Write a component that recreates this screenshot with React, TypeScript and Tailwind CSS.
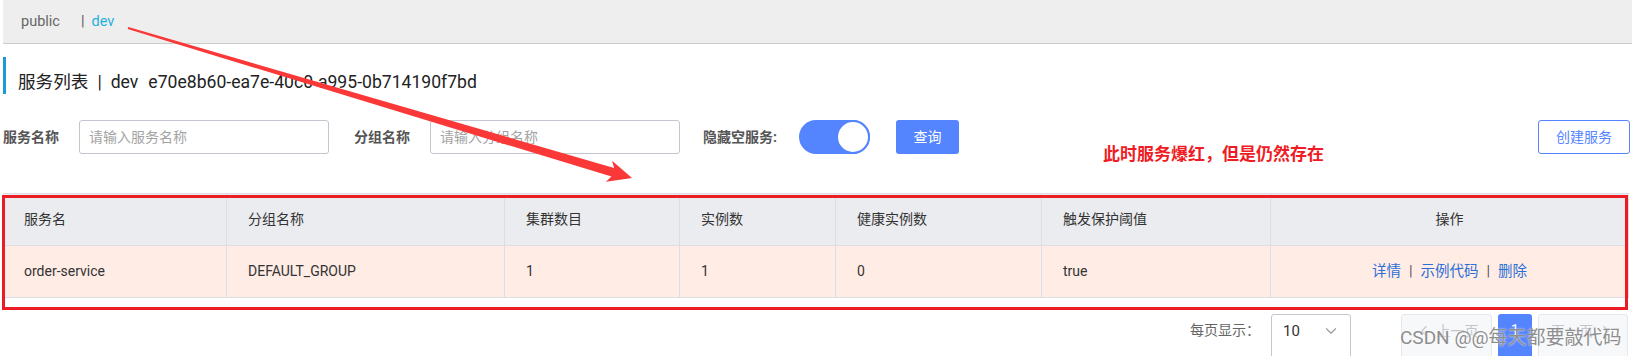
import { ChevronDown, ChevronLeft, ChevronRight } from 'lucide-react'

const columns = ['服务名', '分组名称', '集群数目', '实例数', '健康实例数', '触发保护阈值', '操作']

const rows = [
  { name: 'order-service', group: 'DEFAULT_GROUP', clusters: '1', instances: '1', healthy: '0', threshold: 'true' },
]

function Arrow() {
  return (
    <svg className="absolute left-0 top-0 pointer-events-none" width="1632" height="356" viewBox="0 0 1632 356">
      <polygon
        points="128.3,27 614.1,168 612.1,160.7 632,178 605.9,181.7 611.5,176.6 127.7,29"
        fill="#fb3838"
      />
    </svg>
  )
}

export default function App() {
  return (
    <div className="relative w-[1632px] h-[356px] overflow-hidden bg-white font-[Roboto,'Noto_Sans_CJK_SC',sans-serif] text-[#333]">
      {/* namespace bar */}
      <div className="ml-[3px] h-[44px] bg-[#eeeeee] border-b border-[#cccccc] flex items-center text-[14.5px]">
        <span className="ml-[18px] text-[#666]">public</span>
        <span className="ml-[21px] text-[#555]">|</span>
        <span className="ml-[7px] text-[#1fb0dd]">dev</span>
      </div>

      {/* title */}
      <div className="mt-[13px] flex items-start">
        <div className="ml-[3px] w-[3px] h-[37px] bg-[#1a9ad6]" />
        <div className="ml-[12px] mt-[13px] text-[17.6px] leading-[24px] text-[#222] flex">
          <span>服务列表</span>
          <span className="mx-[9px]">|</span>
          <span>dev</span>
          <span className="ml-[10px]">e70e8b60-ea7e-40c0-a995-0b714190f7bd</span>
        </div>
      </div>

      {/* filters */}
      <div className="mt-[26px] h-[34px] flex items-center text-[14px]">
        <span className="ml-[3px] w-[60px] font-bold text-[#555]">服务名称</span>
        <div className="ml-[16px] w-[250px] h-[34px] border border-[#c4c6cf] rounded-[3px] flex items-center pl-[9px] text-[#a3a3a3]">
          请输入服务名称
        </div>
        <span className="ml-[25px] w-[59px] font-bold text-[#555]">分组名称</span>
        <div className="ml-[17px] w-[250px] h-[34px] border border-[#c4c6cf] rounded-[3px] flex items-center pl-[9px] text-[#a3a3a3]">
          请输入分组名称
        </div>
        <span className="ml-[23px] w-[81px] font-bold text-[#555]">隐藏空服务:</span>
        <div className="ml-[15px] w-[71px] h-[34px] rounded-full bg-[#5584ff] flex justify-end">
          <div className="w-[34px] h-[34px] rounded-full bg-white border-2 border-[#5584ff]" />
        </div>
        <button className="ml-[26px] w-[63px] h-[34px] rounded-[3px] bg-[#5584ff] text-white">查询</button>
        <div className="flex-1" />
        <button className="mr-[2px] w-[92px] h-[34px] rounded-[3px] border border-[#5584ff] text-[#5584ff] bg-white">
          创建服务
        </button>
      </div>

      {/* table */}
      <div className="mt-[39px] ml-[3px] w-[1626px] border-t border-r border-[#dcdee3] text-[14px]">
        <div className="grid grid-cols-[224px_278px_175px_156px_206px_229px_1fr] h-[52px] bg-[#ebecf0] border-b border-[#dcdee3]">
          {columns.map((c, i) => (
            <div
              key={c}
              className={
                i === columns.length - 1
                  ? 'flex items-center justify-center text-[#333]'
                  : 'flex items-center pl-[21px] border-r border-[#dcdee3] text-[#333]'
              }
            >
              {c}
            </div>
          ))}
        </div>
        {rows.map((r) => (
          <div
            key={r.name}
            className="grid grid-cols-[224px_278px_175px_156px_206px_229px_1fr] h-[52px] bg-[#ffece5] border-b border-[#dcdee3]"
          >
            {[r.name, r.group, r.clusters, r.instances, r.healthy, r.threshold].map((v, i) => (
              <div key={i} className="flex items-center pl-[21px] border-r border-[#dcdee3] text-[#333]">
                {v}
              </div>
            ))}
            <div className="flex items-center justify-center text-[#2c6fd6] text-[14.5px]">
              <span>详情</span>
              <span className="mx-[8px] text-[#555]">|</span>
              <span>示例代码</span>
              <span className="mx-[8px] text-[#555]">|</span>
              <span>删除</span>
            </div>
          </div>
        ))}
      </div>

      {/* pagination, cut off by the bottom edge */}
      <div className="mt-[16px] flex items-start justify-end text-[14px] pr-[4px]">
        <span className="mt-[6px] leading-[20px] text-[#666]">每页显示：</span>
        <div className="ml-[11px] w-[80px] h-[48px] border border-[#c4c6cf] rounded-[3px] flex items-start justify-between pt-[6px] pl-[11px] pr-[10px] leading-[20px]">
          <span className="text-[#333] text-[15px]">10</span>
          <ChevronDown size={18} strokeWidth={1.5} className="mt-[1px] text-[#999]" />
        </div>
        <button className="ml-[50px] w-[91px] h-[48px] rounded-[3px] border border-[#e6e7eb] bg-[#f7f8fa] text-[#c4c6cf] flex items-start justify-center gap-[4px] pt-[6px] leading-[20px]">
          <ChevronLeft size={18} strokeWidth={1.5} className="mt-[1px]" />
          上一页
        </button>
        <button className="ml-[6px] w-[34px] h-[48px] rounded-[3px] bg-[#5584ff] text-white pt-[6px] leading-[20px] flex items-start justify-center">1</button>
        <button className="ml-[6px] w-[90px] h-[48px] rounded-[3px] border border-[#e6e7eb] bg-[#f7f8fa] text-[#c4c6cf] flex items-start justify-center gap-[4px] pt-[6px] leading-[20px]">
          下一页
          <ChevronRight size={18} strokeWidth={1.5} className="mt-[1px]" />
        </button>
      </div>

      {/* annotations */}
      <div className="absolute left-[2px] top-[195px] w-[1626px] h-[115px] border-[3px] border-[#ec1c24] pointer-events-none" />
      <div className="absolute left-[1103px] top-[143px] text-[17px] leading-[22px] font-bold text-[#ef1c24]">
        此时服务爆红，但是仍然存在
      </div>
      <Arrow />
      <div className="absolute left-[1400px] top-[326px] whitespace-nowrap text-[19px] leading-[24px] text-[#8e8e8e] [text-shadow:0_0_2px_#fff]">
        CSDN @@每天都要敲代码
      </div>
    </div>
  )
}
